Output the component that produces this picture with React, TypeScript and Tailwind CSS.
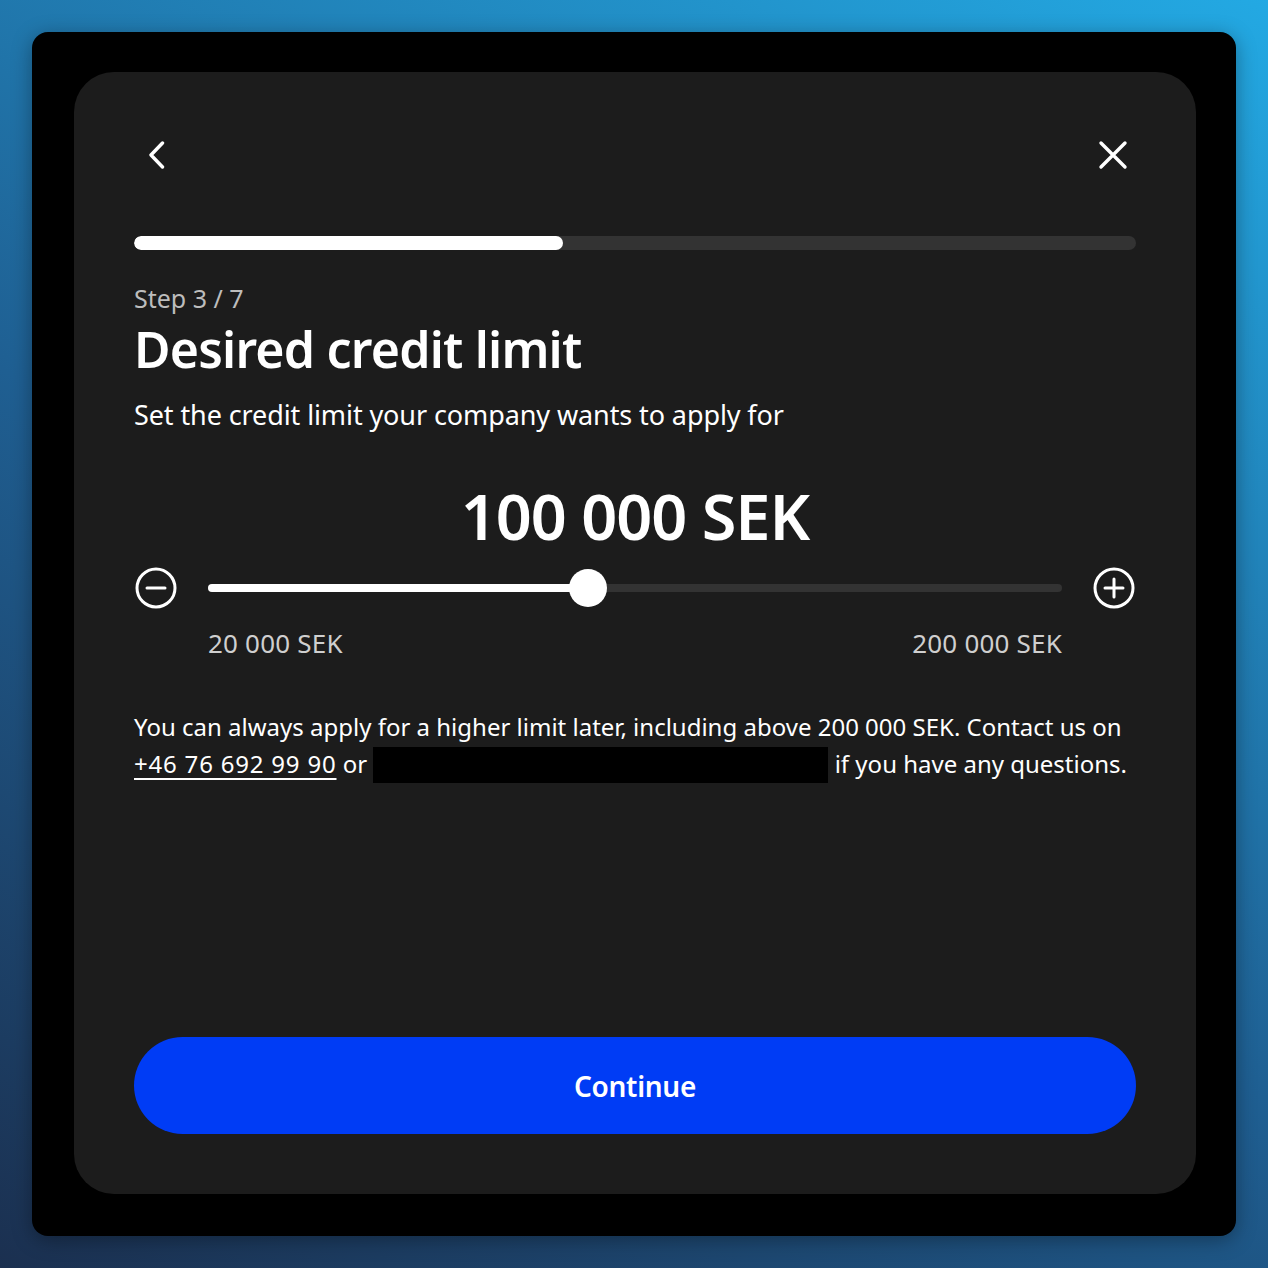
import React, { useState } from 'react';

const MIN = 20000;
const MAX = 200000;

const fmt = (n: number) => n.toLocaleString('en-US').replace(/,/g, ' ');

export default function App() {
  const [amount, setAmount] = useState(100000);
  const step = 3;
  const total = 7;
  const pct = ((amount - MIN) / (MAX - MIN)) * 100;

  return (
    <div className="w-full h-[1268px] bg-[linear-gradient(30deg,#1b3050_0%,#1f5f92_45%,#23a9e3_100%)] p-8 font-['Noto_Sans',sans-serif]">
      <div className="w-full h-full bg-black rounded-[16px] shadow-[0_4px_20px_rgba(0,0,0,0.35)] pl-[42px] pr-[40px] pt-[40px] pb-[42px]">
        <div className="w-full h-full bg-[#1c1c1c] rounded-[40px] flex flex-col px-[60px] pt-[66px] pb-[60px]">
          {/* header */}
          <div className="flex items-center justify-between h-[34px]">
            <button className="w-[34px] h-[34px] flex items-center justify-start pl-[14px]">
              <svg width="17" height="28" viewBox="0 0 17 28" fill="none">
                <path d="M14.5 2 L3 14 L14.5 26" stroke="white" strokeWidth="3.4" strokeLinecap="round" strokeLinejoin="round" />
              </svg>
            </button>
            <button className="w-[44px] h-[34px] flex items-center justify-end pr-[8px]">
              <svg width="30" height="30" viewBox="0 0 30 30" fill="none">
                <path d="M3 3 L27 27 M27 3 L3 27" stroke="white" strokeWidth="3.4" strokeLinecap="round" />
              </svg>
            </button>
          </div>

          {/* progress */}
          <div className="mt-[64px] h-[14px] w-full rounded-full bg-[#333333] overflow-hidden">
            <div className="h-full bg-white rounded-full w-[42.8%]" />
          </div>

          <div className="mt-[32px] text-[25px] leading-[32px] text-[#bdbdbd]">
            Step {step} / {total}
          </div>
          <h1 className="mt-[7px] text-[50px] leading-[56px] font-semibold text-white tracking-[-0.8px]">
            Desired credit limit
          </h1>
          <p className="mt-[20px] text-[27px] leading-[36px] text-white tracking-[-0.1px]">
            Set the credit limit your company wants to apply for
          </p>

          <div className="mt-[48px] text-center text-[63px] leading-[70px] font-semibold text-white tracking-[-1px]">
            {fmt(amount)} SEK
          </div>

          {/* slider */}
          <div className="mt-[16px] flex items-center gap-[30px] h-[42px]">
            <button onClick={() => setAmount(Math.max(MIN, amount - 10000))} className="shrink-0">
              <svg width="44" height="44" viewBox="0 0 44 44" fill="none">
                <circle cx="22" cy="22" r="19" stroke="white" strokeWidth="3" />
                <path d="M13 22 H31" stroke="white" strokeWidth="3" strokeLinecap="round" />
              </svg>
            </button>
            <div className="relative flex-1 h-[8px] rounded-full bg-[#333333]">
              <div className="h-full bg-white rounded-full" style={{ width: `${pct}%` }} />
              <div
                className="absolute top-1/2 -translate-y-1/2 -translate-x-1/2 w-[38px] h-[38px] rounded-full bg-white"
                style={{ left: `${pct}%` }}
              />
            </div>
            <button onClick={() => setAmount(Math.min(MAX, amount + 10000))} className="shrink-0">
              <svg width="44" height="44" viewBox="0 0 44 44" fill="none">
                <circle cx="22" cy="22" r="19" stroke="white" strokeWidth="3" />
                <path d="M13 22 H31 M22 13 V31" stroke="white" strokeWidth="3" strokeLinecap="round" />
              </svg>
            </button>
          </div>
          <div className="mt-[18px] flex justify-between px-[74px] text-[26px] leading-[32px] text-[#cfcfcf] tracking-[0.2px]">
            <span>{fmt(MIN)} SEK</span>
            <span>{fmt(MAX)} SEK</span>
          </div>

          <p className="mt-[49px] text-[24px] leading-[37px] text-white">
            You can always apply for a higher limit later, including above 200 000 SEK. Contact us on{' '}
            <a className="underline underline-offset-[5px] decoration-[2px] tracking-[0.8px]">+46 76 692 99 90</a> or{' '}
            <span className="inline-block align-middle w-[455px] h-[36px] bg-black -mt-[4px]" /> if you have any questions.
          </p>

          <div className="flex-1" />

          <button className="w-full h-[97px] rounded-full bg-[#003cf5] text-white text-[28px] font-semibold tracking-[-0.3px]">
            Continue
          </button>
        </div>
      </div>
    </div>
  );
}
